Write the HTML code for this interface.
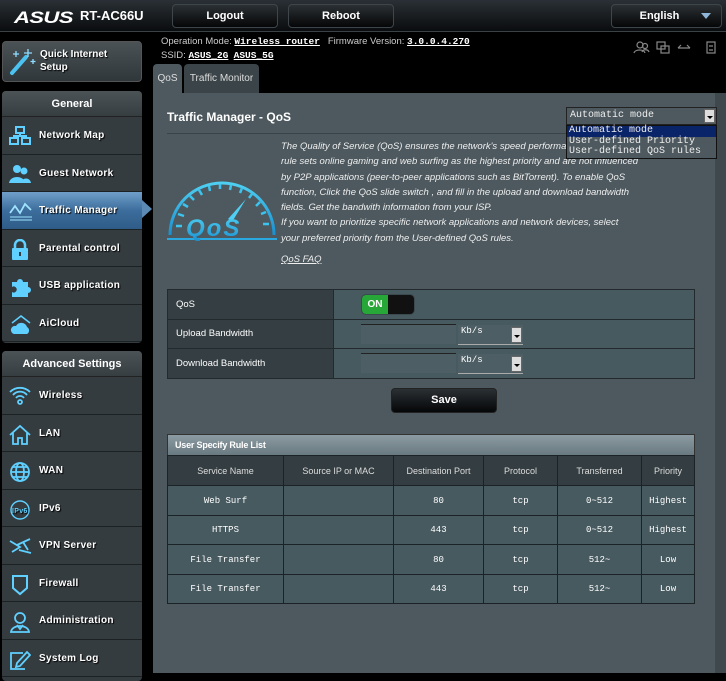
<!DOCTYPE html>
<html><head><meta charset="utf-8">
<style>
*{margin:0;padding:0;box-sizing:border-box}
body{width:726px;height:673px;overflow:hidden;background:#000;font-family:"Liberation Sans",sans-serif;color:#fff;position:relative}
.abs{position:absolute}
.top{left:0;top:0;width:726px;height:32px;background:linear-gradient(#2a3035,#0a0c0e);border-bottom:1px solid #3a4246}
.btn{position:absolute;background:linear-gradient(#2b3034,#050607);border:1px solid #3e464b;border-radius:4px;font-weight:bold;font-size:11px;text-align:center;color:#fff}
.mono{font-family:"Liberation Mono",monospace}
.side{left:2px;width:140px;background:#353c40;border-radius:4px;overflow:hidden}
.hdr{height:26px;line-height:26px;text-align:center;font-weight:bold;font-size:11px;background:linear-gradient(#4b5357,#373e42);border-bottom:1px solid #222}
.item{height:37.5px;border-bottom:1px solid #1c2124;position:relative;font-size:10px;font-weight:bold;line-height:37px;padding-left:37px;letter-spacing:.3px;text-shadow:1px 1px 1px #000}
.item svg{position:absolute;left:7px;top:9px}
.act{background:linear-gradient(#6f9fc9,#3c6d9c 50%,#2f5c87)}
.main{left:153px;top:93px;width:562px;height:580px;background:#4d595f}
.rstrip{left:715px;top:93px;width:11px;height:580px;background:#3f484d}
.desc{font-size:9.5px;font-style:italic;line-height:15.3px;color:#eee}
table{border-collapse:collapse}
.set td{border:1px solid #222a2e;height:29.5px;font-size:9.5px}
.rule td{border:1px solid #1c2326;text-align:center;font-size:9px}
</style></head><body>
<div class="abs top"></div>
<div class="abs" style="left:14px;top:8px;font-weight:bold;font-size:17px;font-style:italic;letter-spacing:-0.5px;transform:scaleX(1.3);transform-origin:left">ASUS</div>
<div class="abs" style="left:80px;top:8px;font-weight:bold;font-size:13px">RT-AC66U</div>
<div class="btn" style="left:172px;top:4px;width:106px;height:24px;line-height:22px">Logout</div>
<div class="btn" style="left:288px;top:4px;width:106px;height:24px;line-height:22px">Reboot</div>
<div class="btn" style="left:611px;top:4px;width:111px;height:24px;line-height:22px;padding-right:14px">English<span style="position:absolute;right:10px;top:8px;width:0;height:0;border-left:5px solid transparent;border-right:5px solid transparent;border-top:6px solid #8fb6d8"></span></div>

<div class="abs" style="left:161px;top:36px;font-size:9.5px;color:#ccc">Operation Mode: <span class="mono" style="color:#fff;font-weight:bold;text-decoration:underline">Wireless router</span>&nbsp;&nbsp;&nbsp;Firmware Version: <span class="mono" style="color:#fff;font-weight:bold;text-decoration:underline">3.0.0.4.270</span></div>
<div class="abs" style="left:161px;top:50px;font-size:9.5px;color:#ccc">SSID: <span class="mono" style="color:#fff;font-weight:bold;text-decoration:underline">ASUS_2G</span>&nbsp; <span class="mono" style="color:#fff;font-weight:bold;text-decoration:underline">ASUS_5G</span></div>
<svg class="abs" style="left:632px;top:40px" width="88" height="16" fill="none" stroke="#888" stroke-width="1.2"><circle cx="8" cy="5" r="3"/><circle cx="13" cy="6" r="2.5"/><path d="M2 13c1-4 10-4 11 0M10 12c1-3 6-3 7 0"/><rect x="25" y="2" width="8" height="7"/><rect x="29" y="6" width="8" height="7"/><path d="M46 8h12M46 8l3-3M58 8l-3-3"/><rect x="75" y="2" width="8" height="11"/><path d="M77 6h4M77 10h4"/></svg>

<!-- sidebar -->
<div class="abs side" style="top:41px;height:41px;background:linear-gradient(#4a5256,#30373b);border:1px solid #555">
<svg class="abs" style="left:5px;top:5px" width="28" height="30"><path d="M4 26L18 10" stroke="#4cc2f0" stroke-width="4" stroke-linecap="round"/><path d="M20 2v8M16 6h8M8 4v6M5 7h6M25 12v5M22.5 14.5h5" stroke="#8fdcff" stroke-width="1.3"/></svg>
<div class="abs" style="left:37px;top:6px;font-size:10px;font-weight:bold;line-height:13px;text-shadow:1px 1px 1px #000">Quick Internet<br>Setup</div></div>

<div class="abs side" style="top:91px;height:252px">
<div class="hdr">General</div>
<div class="item"><svg width="22" height="20" fill="none" stroke="#5fd0ff" stroke-width="2"><rect x="7" y="1" width="8" height="6"/><rect x="1" y="12" width="8" height="6"/><rect x="13" y="12" width="8" height="6"/><path d="M11 7v3M5 12v-2h12v2"/></svg>Network Map</div>
<div class="item"><svg width="22" height="20" fill="#5fd0ff"><circle cx="8" cy="5" r="4"/><circle cx="15" cy="7" r="3.5"/><path d="M0 19c1-8 15-8 16 0z"/><path d="M12 19c1-6 9-6 10 0z"/></svg>Guest Network</div>
<div class="item act"><svg width="24" height="20" fill="none" stroke="#9fe3ff" stroke-width="1.8"><path d="M1 12l5-7 5 7 5-9 6 6"/><path d="M1 16h22M1 19h22" stroke-width="1"/></svg>Traffic Manager</div>
<div class="item"><svg width="22" height="22" fill="#5fd0ff"><path d="M6 9V6a5 5 0 0110 0v3" fill="none" stroke="#5fd0ff" stroke-width="2.5"/><rect x="3" y="9" width="16" height="12" rx="1"/><rect x="10" y="13" width="2" height="4" fill="#353c40"/></svg>Parental control</div>
<div class="item"><svg width="22" height="22" fill="#5fd0ff"><path d="M3 6h5a3 3 0 116 0h5v5a3 3 0 110 6v4H3v-5a3 3 0 100-5z"/></svg>USB application</div>
<div class="item"><svg width="24" height="22" fill="#5fd0ff"><path d="M3 9L12 2l9 7" fill="none" stroke="#5fd0ff" stroke-width="1.5"/><path d="M5 20a4 4 0 012-8 6 6 0 0111 1 4 4 0 010 7z"/></svg>AiCloud</div>
</div>

<div class="abs side" style="top:351px;height:330px">
<div class="hdr">Advanced Settings</div>
<div class="item"><svg width="22" height="20" fill="none" stroke="#5fd0ff" stroke-width="1.8"><path d="M1 6a14 14 0 0120 0M4 9a9 9 0 0114 0M7 12a5 5 0 018 0"/><circle cx="11" cy="16" r="2"/></svg>Wireless</div>
<div class="item"><svg width="22" height="22" fill="none" stroke="#5fd0ff" stroke-width="1.8"><path d="M1 11L11 2l10 9M4 9v11h5v-6h4v6h5V9"/></svg>LAN</div>
<div class="item"><svg width="22" height="22" fill="none" stroke="#5fd0ff" stroke-width="1.8"><circle cx="11" cy="11" r="9"/><ellipse cx="11" cy="11" rx="4" ry="9"/><path d="M2 11h18M4 6h14M4 16h14"/></svg>WAN</div>
<div class="item"><svg width="22" height="22" fill="none" stroke="#5fd0ff" stroke-width="1.4"><circle cx="11" cy="11" r="9"/><text x="3" y="14" font-size="7" fill="#5fd0ff" stroke="none" font-family="Liberation Sans">IPv6</text></svg>IPv6</div>
<div class="item"><svg width="24" height="20" fill="none" stroke="#5fd0ff" stroke-width="1.8"><path d="M1 5l10 6-8 5M8 9l13-6M10 14l12 3M14 6l5 8"/></svg>VPN Server</div>
<div class="item"><svg width="22" height="22" fill="none" stroke="#5fd0ff" stroke-width="2"><path d="M4 2h14v12l-7 6-7-6z"/></svg>Firewall</div>
<div class="item"><svg width="22" height="22" fill="none" stroke="#5fd0ff" stroke-width="1.8"><circle cx="11" cy="7" r="5"/><path d="M2 21c1-8 17-8 18 0zM8 14l3 4 3-4"/></svg>Administration</div>
<div class="item"><svg width="22" height="22" fill="none" stroke="#5fd0ff" stroke-width="1.8"><path d="M16 20H2V4h12"/><path d="M8 14l10-11 3 3-10 11-4 1z"/></svg>System Log</div>
</div>

<div class="abs" style="left:142px;top:200px;width:0;height:0;border-top:9px solid transparent;border-bottom:9px solid transparent;border-left:10px solid #5b8ab5"></div>

<!-- tabs -->
<div class="abs" style="left:153px;top:64px;width:29px;height:30px;background:#4d595f;border-radius:4px 4px 0 0;font-size:10px;line-height:30px;text-align:center;color:#ddd">QoS</div>
<div class="abs" style="left:184px;top:64px;width:75px;height:29px;background:#3b4448;border-radius:4px 4px 0 0;font-size:10px;line-height:29px;text-align:center;color:#ddd">Traffic Monitor</div>

<div class="abs main"></div>
<div class="abs rstrip"></div>
<div class="abs" style="left:167px;top:110px;font-size:12px;font-weight:bold">Traffic Manager - QoS</div>
<div class="abs" style="left:167px;top:133px;width:528px;height:1px;background:#3a4448"></div>

<div class="abs desc" style="left:281px;top:139px;white-space:nowrap">The Quality of Service (QoS) ensures the network's speed performance<br>rule sets online gaming and web surfing as the highest priority and are not influenced<br>by P2P applications (peer-to-peer applications such as BitTorrent). To enable QoS<br>function, Click the QoS slide switch , and fill in the upload and download bandwidth<br>fields. Get the bandwith information from your ISP.<br>If you want to prioritize specific network applications and network devices, select<br>your preferred priority from the User-defined QoS rules.</div>
<div class="abs desc" style="left:281px;top:252px;text-decoration:underline">QoS FAQ</div>

<!-- QoS logo -->
<svg class="abs" style="left:166px;top:174px" width="112" height="70">
<defs><linearGradient id="g" x1="0" y1="0" x2="0" y2="1"><stop offset="0" stop-color="#4fd0f2"/><stop offset="1" stop-color="#1a8fd0"/></linearGradient></defs>
<path d="M4 61A52 52 0 01108 61" fill="none" stroke="url(#g)" stroke-width="3"/>
<path d="M1 65h110" stroke="#2aa8e0" stroke-width="2"/>
<g stroke="#3cc4ef" stroke-width="2.5">
<path d="M10 52l6 0M12 40l6 2M17 30l5 3M24 22l4 4M33 16l3 5M43 12l1 5M54 10v5M65 11l-1 5M76 14l-2 5M86 20l-3 4M94 28l-4 4M100 38l-5 2M103 50h-6"/></g>
<path d="M62 45L80 25 66 48z" fill="#4fd0f2"/>
<text x="20" y="62" font-size="24" font-weight="bold" font-style="italic" fill="url(#g)" font-family="Liberation Sans" letter-spacing="2">QoS</text>
</svg>

<!-- mode select -->
<div class="abs mono" style="left:566px;top:107px;width:151px;height:18px;background:#4d595f;border:1px solid #222;font-size:10px;line-height:15px;padding-left:3px;color:#eee">Automatic mode<span style="position:absolute;right:1px;top:1px;width:11px;height:14px;background:#ddd;border:1px solid #666"><span style="position:absolute;left:2px;top:6px;border-left:3px solid transparent;border-right:3px solid transparent;border-top:3px solid #000"></span></span></div>
<div class="abs mono" style="left:566px;top:125px;width:151px;height:34px;background:#4d595f;border:1px solid #111;font-size:10px;line-height:10.7px;color:#eee">
<div style="background:#0a246a;padding-left:2px">Automatic mode</div><div style="padding-left:2px">User-defined Priority</div><div style="padding-left:2px">User-defined QoS rules</div></div>

<!-- settings -->
<table class="abs set" style="left:167px;top:289px;width:528px">
<tr><td style="width:166px;background:#353e42;padding-left:8px">QoS</td><td style="background:#475a60;position:relative"><div style="position:absolute;left:27px;top:4px;width:54px;height:21px;border-radius:5px;background:#111;border:1px solid #3b4a4f;overflow:hidden"><div style="width:26px;height:100%;background:#27a737;font-weight:bold;font-size:10px;line-height:19px;text-align:center">ON</div></div></td></tr>
<tr><td style="background:#353e42;padding-left:8px">Upload Bandwidth</td><td style="background:#475a60;position:relative"><div style="position:absolute;left:27px;top:4px;width:95px;height:20px;border-top:1px solid #222;background:#4d5f65"></div><div class="mono" style="position:absolute;left:124px;top:5px;width:65px;height:20px;background:#4d5f65;border-bottom:1px solid #aaa;font-size:9px;padding-left:3px;line-height:13px">Kb/s<span style="position:absolute;right:1px;top:2px;width:11px;height:16px;background:#ddd;border:1px solid #666"><span style="position:absolute;left:2px;top:7px;border-left:3px solid transparent;border-right:3px solid transparent;border-top:3px solid #000"></span></span></div></td></tr>
<tr><td style="background:#353e42;padding-left:8px">Download Bandwidth</td><td style="background:#475a60;position:relative"><div style="position:absolute;left:27px;top:4px;width:95px;height:20px;border-top:1px solid #222;background:#4d5f65"></div><div class="mono" style="position:absolute;left:124px;top:5px;width:65px;height:20px;background:#4d5f65;border-bottom:1px solid #aaa;font-size:9px;padding-left:3px;line-height:13px">Kb/s<span style="position:absolute;right:1px;top:2px;width:11px;height:16px;background:#ddd;border:1px solid #666"><span style="position:absolute;left:2px;top:7px;border-left:3px solid transparent;border-right:3px solid transparent;border-top:3px solid #000"></span></span></div></td></tr>
</table>

<div class="btn" style="left:391px;top:388px;width:106px;height:25px;line-height:23px;border-color:#222">Save</div>

<!-- rule list -->
<div class="abs" style="left:167px;top:434px;width:528px;height:22px;background:linear-gradient(#8c9ba2,#6a7a81);border:1px solid #333;font-size:9px;font-weight:bold;line-height:20px;padding-left:7px;letter-spacing:-.2px">User Specify Rule List</div>
<table class="abs rule" style="left:167px;top:455px;width:528px">
<tr style="background:#343d41;height:30px;font-size:9.5px;color:#ddd"><td style="width:116px">Service Name</td><td style="width:110px">Source IP or MAC</td><td style="width:90px">Destination Port</td><td style="width:74px">Protocol</td><td style="width:84px">Transferred</td><td>Priority</td></tr>
<tr class="mono" style="background:#475a60;height:30px"><td>Web Surf</td><td></td><td>80</td><td>tcp</td><td>0~512</td><td>Highest</td></tr>
<tr class="mono" style="background:#475a60;height:29px"><td>HTTPS</td><td></td><td>443</td><td>tcp</td><td>0~512</td><td>Highest</td></tr>
<tr class="mono" style="background:#475a60;height:30px"><td>File Transfer</td><td></td><td>80</td><td>tcp</td><td>512~</td><td>Low</td></tr>
<tr class="mono" style="background:#475a60;height:29px"><td>File Transfer</td><td></td><td>443</td><td>tcp</td><td>512~</td><td>Low</td></tr>
</table>
</body></html>
